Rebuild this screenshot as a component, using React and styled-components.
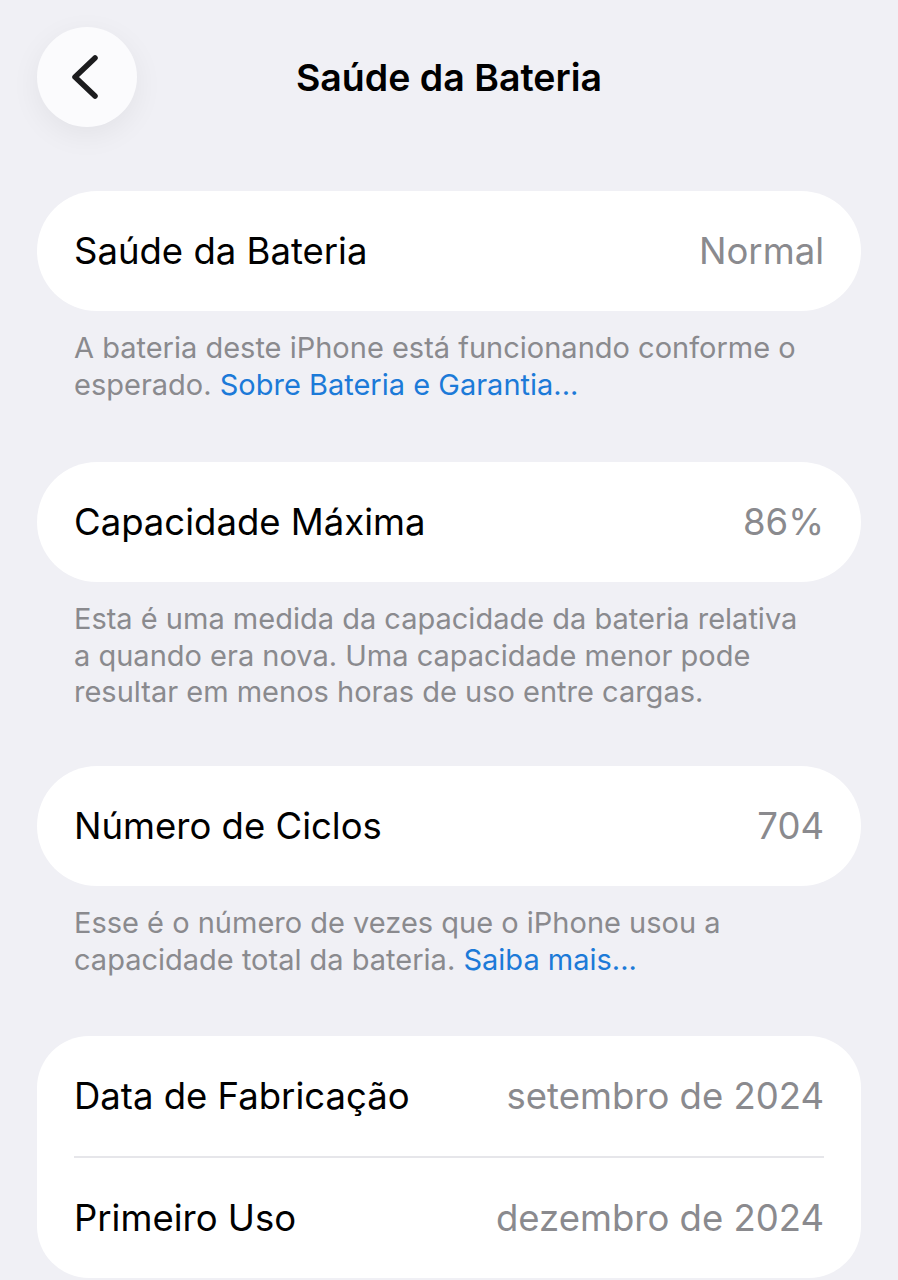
import React from 'react'
import styled, { createGlobalStyle } from 'styled-components'

const GlobalStyle = createGlobalStyle`
  html, body {
    margin: 0;
    padding: 0;
    background: #f0f0f5;
  }
  body {
    font-family: Inter, "Noto Sans", "Liberation Sans", sans-serif;
    -webkit-font-smoothing: antialiased;
  }
`

const Page = styled.div`
  width: 898px;
  min-height: 1280px;
  background: #f0f0f5;
  padding: 27px 37px 0;
  box-sizing: border-box;
`

const Header = styled.header`
  position: relative;
  display: flex;
  align-items: center;
  justify-content: center;
  height: 100px;
  margin-bottom: 64px;
`

const BackButton = styled.button`
  position: absolute;
  left: 0;
  top: 0;
  width: 100px;
  height: 100px;
  border: none;
  border-radius: 50%;
  background: #fbfbfd;
  box-shadow: 0 8px 30px rgba(0, 0, 0, 0.06);
  display: flex;
  align-items: center;
  justify-content: center;
  padding: 0;
  padding-right: 6px;
`

const Title = styled.h1`
  margin: 0;
  font-size: 37.5px;
  font-weight: 600;
  color: #000;
  letter-spacing: 0;
`

const Card = styled.div`
  background: #fff;
  border-radius: ${(p) => (p.$tall ? '52px' : '60px')};
  padding: 0 37px;
`

const Row = styled.div`
  display: flex;
  align-items: center;
  justify-content: space-between;
  height: 120px;
  font-size: 36.5px;
  & + & {
    border-top: 2px solid #e6e6ea;
  }
`

const Label = styled.span`
  color: #000;
`

const Value = styled.span`
  color: #8a8a8e;
`

const Footer = styled.p`
  margin: 0;
  padding: 19px 55px 0 37px;
  font-size: 29px;
  line-height: 36.5px;
  color: #8a8a8e;
  height: ${(p) => p.$h}px;
  box-sizing: border-box;
`

const Link = styled.a`
  color: #1c7ad8;
  text-decoration: none;
`

const Chevron = () => (
  <svg width="30" height="46" viewBox="0 0 30 46" fill="none">
    <path
      d="M26 4 L6 23 L26 42"
      stroke="#1c1c1e"
      strokeWidth="5.5"
      strokeLinecap="round"
      strokeLinejoin="round"
    />
  </svg>
)

export default function App() {
  return (
    <>
      <GlobalStyle />
      <Page>
        <Header>
          <BackButton aria-label="Voltar">
            <Chevron />
          </BackButton>
          <Title>Saúde da Bateria</Title>
        </Header>

        <Card>
          <Row>
            <Label>Saúde da Bateria</Label>
            <Value>Normal</Value>
          </Row>
        </Card>
        <Footer $h={151}>
          A bateria deste iPhone está funcionando conforme o esperado.{' '}
          <Link href="#">Sobre Bateria e Garantia...</Link>
        </Footer>

        <Card>
          <Row>
            <Label>Capacidade Máxima</Label>
            <Value>86%</Value>
          </Row>
        </Card>
        <Footer $h={184}>
          Esta é uma medida da capacidade da bateria relativa a quando era nova.
          Uma capacidade menor pode resultar em menos horas de uso entre cargas.
        </Footer>

        <Card>
          <Row>
            <Label>Número de Ciclos</Label>
            <Value>704</Value>
          </Row>
        </Card>
        <Footer $h={150}>
          Esse é o número de vezes que o iPhone usou a capacidade total da
          bateria. <Link href="#">Saiba mais...</Link>
        </Footer>

        <Card $tall>
          <Row>
            <Label>Data de Fabricação</Label>
            <Value>setembro de 2024</Value>
          </Row>
          <Row>
            <Label>Primeiro Uso</Label>
            <Value>dezembro de 2024</Value>
          </Row>
        </Card>
      </Page>
    </>
  )
}
